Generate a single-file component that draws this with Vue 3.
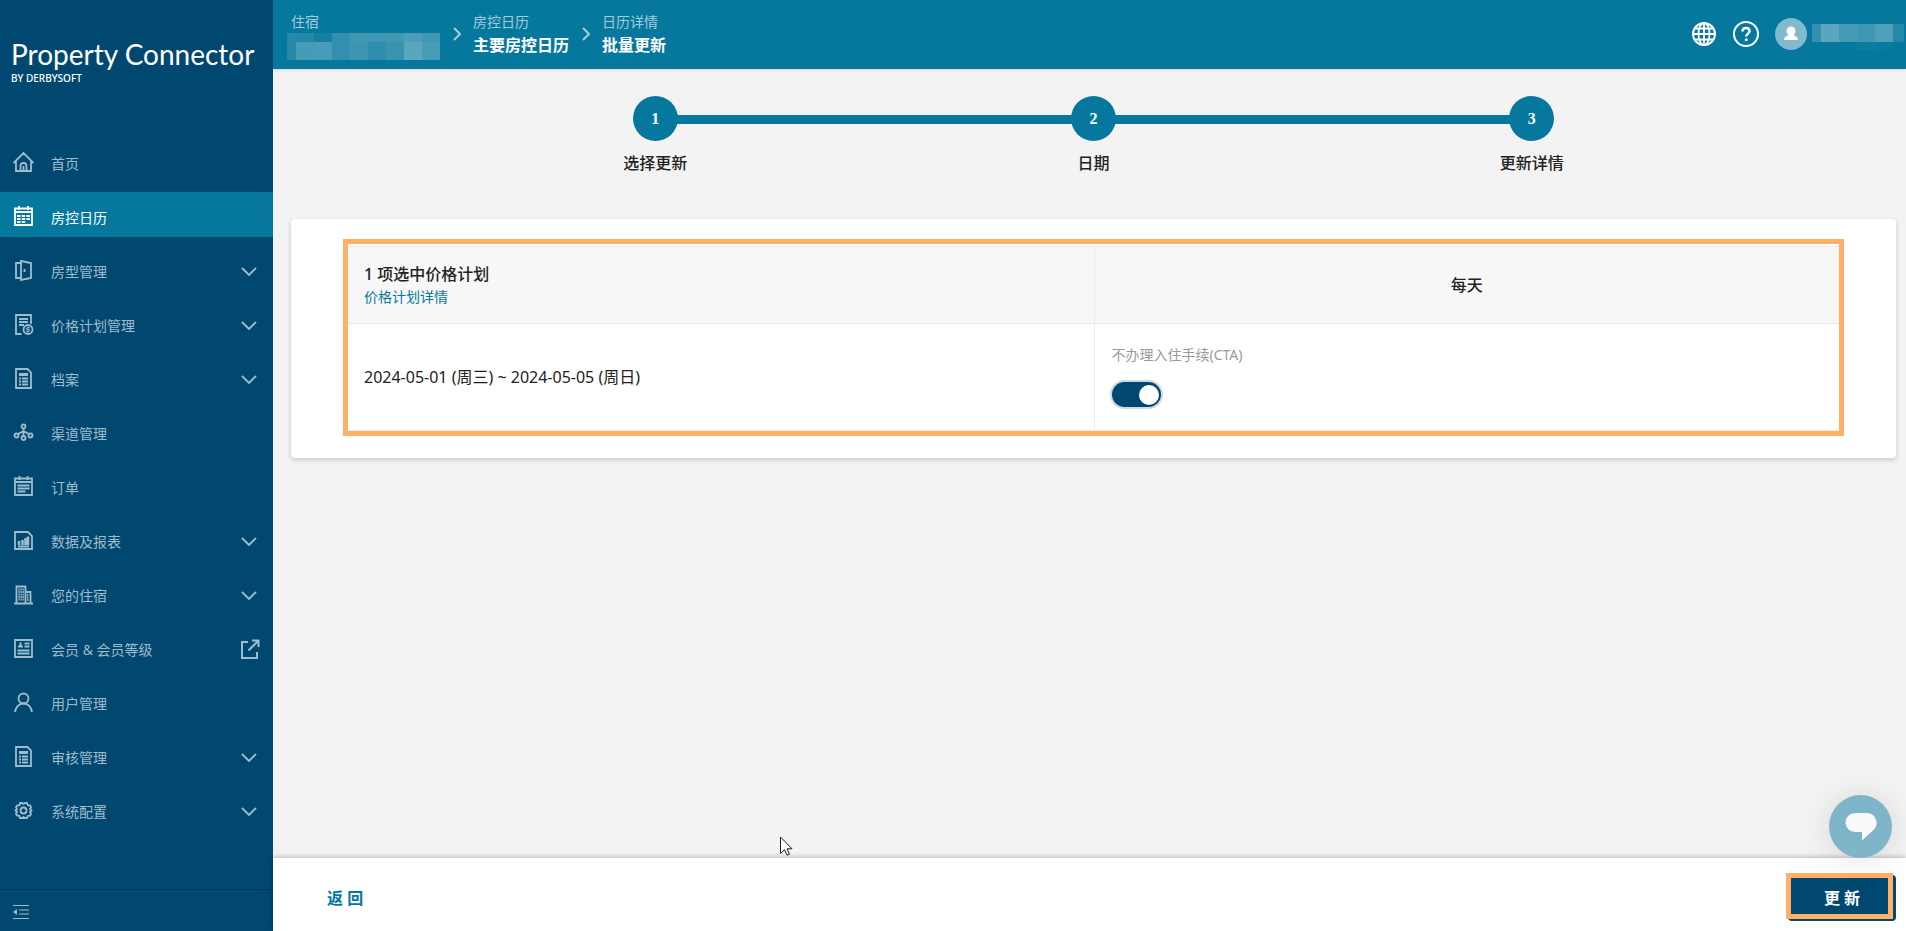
<template>
  <div class="layout">
    <aside class="sidebar">
      <div class="logo">
        <div class="logo-name">Property Connector</div>
        <div class="logo-by">BY DERBYSOFT</div>
      </div>

      <nav class="menu">
        <a
          v-for="item in menu"
          :key="item.label"
          href="#"
          class="menu-item"
          :class="{ active: item.active }"
          @click.prevent
        >
          <svg class="menu-icon" viewBox="0 0 21 21" v-html="icons[item.icon]"></svg>
          <span class="menu-label">{{ item.label }}</span>
          <svg v-if="item.children" class="chevron" viewBox="0 0 16 10">
            <path d="M1 1l7 7 7-7" />
          </svg>
          <svg v-if="item.external" class="external" viewBox="0 0 20 20">
            <path d="M8 3H2v16h15v-6M12 1.500h6.500V8M18 2L8.500 11.500" />
          </svg>
        </a>
      </nav>

      <div class="sidebar-footer">
        <button class="collapse-btn" aria-label="收起菜单">
          <svg width="16" height="14" viewBox="0 0 16 14">
            <path d="M0 .5h16M6 5h10M6 9h10M0 13.500h16" fill="none" stroke="currentColor" />
            <path d="M0 7l4-3v6z" fill="currentColor" />
          </svg>
        </button>
      </div>
    </aside>

    <div class="main">
      <header class="topbar">
        <div class="crumb">
          <span class="crumb-label">住宿</span>
          <svg class="hotel-mask" viewBox="0 0 153 27">
            <rect v-for="(b, i) in hotelBlocks" :key="i" :x="b[0]" :y="b[1]" :width="b[2]" :height="b[3]" fill="#fff" :fill-opacity="b[4]" />
          </svg>
        </div>
        <svg class="crumb-arrow" viewBox="0 0 8 14"><path d="M1 1l6 6-6 6" /></svg>
        <div class="crumb">
          <span class="crumb-label">房控日历</span>
          <a href="#" class="crumb-title" @click.prevent>主要房控日历</a>
        </div>
        <svg class="crumb-arrow" viewBox="0 0 8 14"><path d="M1 1l6 6-6 6" /></svg>
        <div class="crumb">
          <span class="crumb-label">日历详情</span>
          <span class="crumb-title">批量更新</span>
        </div>

        <div class="tools">
          <button class="tool-btn" aria-label="语言">
            <svg width="26" height="26" viewBox="0 0 26 26" fill="none" stroke="#fff" stroke-width="1.800">
              <circle cx="13" cy="13" r="11" stroke-width="2" />
              <ellipse cx="13" cy="13" rx="5.500" ry="11" />
              <path d="M13 2v22M2 13h22M4 7.500h18M4 18.500h18" />
            </svg>
          </button>
          <button class="tool-btn" aria-label="帮助">
            <svg width="26" height="26" viewBox="0 0 26 26" fill="none" stroke="#fff" stroke-width="2">
              <circle cx="13" cy="13" r="12" />
              <path d="M9.500 10.500c0-2.200 1.500-3.500 3.500-3.500s3.500 1.200 3.500 3.200c0 2.300-3.300 2.600-3.300 5.300" stroke-width="2.500" />
              <circle cx="13.200" cy="18.800" r="1.500" fill="#fff" stroke="none" />
            </svg>
          </button>
          <button class="account" aria-label="账户">
            <svg width="32" height="32" viewBox="0 0 32 32">
              <circle cx="16" cy="16" r="16" fill="#82b9cd" />
              <circle cx="16" cy="13" r="4.500" fill="#fff" />
              <path d="M9 22c0-3 2-4 5-5h4c3 1 5 2 5 5z" fill="#fff" />
            </svg>
            <svg class="user-mask" viewBox="0 0 92 32">
              <rect v-for="(b, i) in userBlocks" :key="i" :x="b[0]" :y="b[1]" :width="b[2]" :height="b[3]" fill="#fff" :fill-opacity="b[4]" />
            </svg>
          </button>
        </div>
      </header>

      <main class="content">
        <ol class="steps">
          <li v-for="(step, index) in steps" :key="step" class="step">
            <span class="step-circle">{{ index + 1 }}</span>
            <span class="step-label">{{ step }}</span>
          </li>
        </ol>

        <section class="card">
          <div class="highlight">
            <table class="plan-table">
              <thead>
                <tr>
                  <th class="plan-head">
                    <div>1 项选中价格计划</div>
                    <a href="#" class="plan-link" @click.prevent>价格计划详情</a>
                  </th>
                  <th>每天</th>
                </tr>
              </thead>
              <tbody>
                <tr>
                  <td>2024-05-01 (周三) ~ 2024-05-05 (周日)</td>
                  <td class="cta-cell">
                    <label for="cta" class="cta-label">不办理入住手续(CTA)</label>
                    <input id="cta" v-model="closedToArrival" type="checkbox" class="switch" />
                  </td>
                </tr>
              </tbody>
            </table>
          </div>
        </section>
      </main>

      <footer class="footer">
        <button class="back-btn">返 回</button>
        <div class="submit">
          <button class="submit-btn">更 新</button>
        </div>
        <button class="chat-btn" aria-label="在线客服">
          <svg width="32" height="28" viewBox="0 0 32 28">
            <path d="M10 0h12a10 10 0 0 1 7.500 16L17 27.500V19h-7A9.500 9.500 0 0 1 10 0z" fill="#fafafa" />
          </svg>
        </button>
      </footer>
    </div>

    <svg class="pointer" width="13" height="20" viewBox="0 0 13 20">
      <path d="M.5 1v16.500l4-3.800 2.500 5.500 2.500-1-2.500-5.400h5z" fill="#fff" stroke="#1c1c2c" />
    </svg>
  </div>
</template>

<script setup>
import { ref } from 'vue'

const closedToArrival = ref(true)

const steps = ['选择更新', '日期', '更新详情']

const menu = [
  { label: '首页', icon: 'home' },
  { label: '房控日历', icon: 'calendar', active: true },
  { label: '房型管理', icon: 'door', children: true },
  { label: '价格计划管理', icon: 'price', children: true },
  { label: '档案', icon: 'file', children: true },
  { label: '渠道管理', icon: 'channel' },
  { label: '订单', icon: 'order' },
  { label: '数据及报表', icon: 'chart', children: true },
  { label: '您的住宿', icon: 'building', children: true },
  { label: '会员 & 会员等级', icon: 'member', external: true },
  { label: '用户管理', icon: 'user' },
  { label: '审核管理', icon: 'file', children: true },
  { label: '系统配置', icon: 'gear', children: true }
]

// Sidebar icons, drawn on a 21x21 grid
const icons = {
  home: '<path d="M.5 11l10-10 10 10M3 9.500V19h15V9.500M7.500 19v-5a3 3 0 0 1 6 0v5M10.500 14v5"/>',
  calendar: '<path d="M2 2.500h17V19H2zM2 6h17M6 0v4M15 0v4"/><path d="M4 10h13M4 13h13M4 16h9" stroke-width="2" stroke-dasharray="3.500 1.200"/>',
  door: '<path d="M8 1l10 2v15L8 20zM8 3H3v15h5M11.500 9v3"/>',
  price: '<path d="M8.500 20H3V1h15v9M6 5h9M6 8h9M6 11h5"/><circle cx="15" cy="15.500" r="4.500"/><path d="M16.800 13.700h-2.500c-1.200 0-1.200 1.800 0 1.800h1.300c1.300 0 1.300 1.900 0 1.900h-2.500M15 12.500v6" stroke-width="1"/>',
  file: '<path d="M3 1h11.500L18 4.500V20H3z"/><path d="M6 6.500h9" stroke-width="3"/><path d="M6 10.500h2M9 10.500h6M6 13.500h2M9 13.500h6M6 16.500h2M9 16.500h6"/>',
  channel: '<circle cx="10.500" cy="4.500" r="2"/><circle cx="3.500" cy="13.500" r="2"/><circle cx="10.500" cy="16" r="2"/><circle cx="17.500" cy="13.500" r="2"/><path d="M10.500 6.500V14M5 12l4-2h3l4 2"/>',
  order: '<path d="M2 2.500h17V19H2zM2 6h17M6.500 0v4M14.500 0v4M4.500 9.500h12M4.500 12.500h12M4.500 15.500h8"/>',
  chart: '<path d="M2 2h13l4 4v13H2zM5 16.500h11"/><path d="M6 15v-4M9.500 15v-5M12.500 15V8M15 15V6.500" stroke-width="2.500"/>',
  building: '<path d="M3.500 19V2.500h9V19M12.500 8h5v11M1 19.500h19"/><path d="M5.500 5.500h6M5.500 8h6M5.500 10.500h6M5.500 13h6M5.500 15.500h6M14 11h2M14 13.500h2M14 16h2" stroke-dasharray="1.300 .7"/>',
  member: '<path d="M2 2h17v17H2zM11.500 5.500h5M11.500 8.500h5M4.500 12.500h12M4.500 15.500h12"/><path d="M5 9.500V8l1.500-1V4.500h2V7L10 8v1.500z" fill="currentColor" stroke="none"/>',
  user: '<circle cx="10.500" cy="6.500" r="5"/><path d="M2 20c.8-5 4-8.500 8.500-8.500S18.200 15 19 20" stroke-width="2"/>',
  gear: '<path d="M7 4.500V3h2l1.500 1L12 3h2l.8 2.200 2.400.3.800 2L17 9l1.500 1.500L17 12l1 2-1 1.700-2.300.3L14 18h-2l-1.500-1L9 18H7l-.7-2.200-2.300-.3-1-1.500 1-2-1.500-1.500L4 9 3 7l1-1.500 2.500-.3z"/><circle cx="10.500" cy="10.500" r="3"/>'
}

// Masked names: x, y, width, height, opacity
const hotelBlocks = [
  [0, 0, 9, 27, 0.13],
  [9, 0, 18, 9, 0.12],
  [27, 0, 18, 9, 0.06],
  [9, 9, 18, 18, 0.26],
  [27, 9, 18, 18, 0.27],
  [45, 0, 18, 27, 0.18],
  [63, 0, 54, 9, 0.24],
  [63, 9, 18, 18, 0.22],
  [81, 9, 18, 18, 0.17],
  [99, 9, 18, 18, 0.2],
  [117, 0, 18, 9, 0.28],
  [135, 0, 18, 9, 0.24],
  [117, 9, 18, 18, 0.34],
  [135, 9, 18, 18, 0.27]
]
const userBlocks = [
  [0, 6, 9, 18, 0.18],
  [9, 6, 18, 18, 0.34],
  [27, 6, 18, 18, 0.26],
  [45, 6, 18, 18, 0.23],
  [63, 6, 18, 18, 0.3],
  [81, 6, 11, 18, 0.12],
  [45, 24, 18, 8, 0.03],
  [63, 24, 18, 8, 0.02]
]
</script>

<style>
body {
  margin: 0;
  background: #f3f3f3;
}
</style>

<style scoped>
.layout {
  display: flex;
  min-height: 100vh;
  font-family: "Noto Sans", "Noto Sans CJK SC", sans-serif;
  font-size: 16px;
  line-height: 24px;
  color: #222;
}

a {
  text-decoration: none;
}

button {
  display: block;
  padding: 0;
  border: none;
  background: none;
  font: inherit;
  color: inherit;
  cursor: pointer;
}

svg {
  display: block;
  flex: none;
}

/* Sidebar */
.sidebar {
  display: flex;
  flex-direction: column;
  flex: none;
  width: 273px;
  background: #004870;
  color: #9fbccc;
}

.logo {
  padding: 37px 11px 0;
  height: 101px;
  color: #fff;
}

.logo-name {
  font-family: Lato, sans-serif;
  font-size: 28px;
  line-height: 35px;
  white-space: nowrap;
}

.logo-by {
  font-size: 10px;
  line-height: 12px;
  font-weight: 500;
}

.menu {
  display: flex;
  flex-direction: column;
  gap: 9px;
}

.menu-item {
  display: flex;
  align-items: center;
  box-sizing: border-box;
  height: 45px;
  padding: 4px 16px 0 13px;
  font-size: 14px;
  color: inherit;
}

.menu-item.active {
  background: #06789d;
  color: #fff;
}

.menu-icon {
  width: 21px;
  height: 21px;
  margin-right: 17px;
  fill: none;
  stroke: currentColor;
  stroke-width: 1.8;
}

.menu-label {
  flex: 1;
  padding-top: 2px;
}

.chevron {
  width: 16px;
  height: 10px;
  margin-top: 2px;
  fill: none;
  stroke: currentColor;
  stroke-width: 1.8;
}

.external {
  width: 20px;
  height: 20px;
  margin-right: -3px;
  fill: none;
  stroke: currentColor;
  stroke-width: 2;
}

.sidebar-footer {
  margin-top: auto;
  padding: 15px 13px 12px;
  border-top: 1px solid #003558;
}

/* Top bar */
.main {
  display: flex;
  flex-direction: column;
  flex: 1;
  min-width: 0;
}

.topbar {
  display: flex;
  align-items: center;
  box-sizing: border-box;
  height: 69px;
  padding: 0 2px 2px 18px;
  background: #06789d;
  color: #fff;
  box-shadow: 0 1px 3px rgba(0, 0, 0, 0.12);
}

.crumb {
  display: flex;
  flex-direction: column;
  height: 46px;
}

.crumb-label {
  font-size: 14px;
  line-height: 22px;
  color: #a3ccda;
}

.crumb-title {
  font-weight: 700;
  color: #fff;
}

.hotel-mask {
  width: 153px;
  height: 27px;
  margin-left: -4px;
}

.crumb-arrow {
  width: 8px;
  height: 14px;
  margin: 0 12px 0 13px;
  fill: none;
  stroke: #a3ccda;
  stroke-width: 2;
}

.tools {
  display: flex;
  align-items: center;
  gap: 16px;
  margin-left: auto;
}

.account {
  display: flex;
  align-items: center;
  gap: 5px;
}

.user-mask {
  width: 92px;
  height: 32px;
}

/* Steps */
.content {
  flex: 1;
  padding: 27px 10px 27px 18px;
}

.steps {
  display: flex;
  margin: 0 145px 44px;
  padding: 0;
  list-style: none;
}

.step {
  position: relative;
  display: flex;
  flex-direction: column;
  align-items: center;
  flex: 1;
  gap: 10px;
}

.step + .step::before {
  content: "";
  position: absolute;
  top: 19px;
  right: 50%;
  width: 100%;
  height: 9px;
  background: #06789d;
}

.step-circle {
  position: relative;
  z-index: 1;
  width: 45px;
  height: 45px;
  border-radius: 50%;
  background: #06789d;
  color: #fff;
  font-family: "Liberation Serif", serif;
  font-weight: 700;
  line-height: 45px;
  text-align: center;
}

.step-label {
  line-height: 24px;
  font-weight: 500;
}

/* Plan card */
.card {
  padding: 20px 52px 22px;
  background: #fff;
  border-radius: 4px;
  box-shadow: 0 2px 5px rgba(0, 0, 0, 0.18);
}

.highlight {
  padding-top: 2px;
  border: 5px solid #ffb065;
}

.plan-table {
  width: 100%;
  table-layout: fixed;
  border-spacing: 0;
}

.plan-table th,
.plan-table td {
  box-sizing: border-box;
  padding: 0 16px;
  border-bottom: 1px solid #ebebeb;
}

.plan-table th {
  height: 78px;
  border-top: 1px solid #ebebeb;
  background: #f7f7f7;
  font-weight: 500;
}

.plan-table td {
  height: 107px;
}

.plan-table th + th,
.plan-table td + td {
  border-left: 1px solid #ebebeb;
}

.plan-table .plan-head {
  text-align: left;
}

.plan-link {
  display: block;
  font-size: 14px;
  line-height: 22px;
  font-weight: 400;
  color: #06789d;
}

.plan-table .cta-cell {
  padding: 20px 17px 0;
  vertical-align: top;
}

.cta-label {
  display: block;
  margin-bottom: 16px;
  font-size: 14px;
  line-height: 22px;
  color: #999;
}

.switch {
  appearance: none;
  display: flex;
  align-items: center;
  box-sizing: border-box;
  width: 49px;
  height: 25px;
  margin: 0;
  padding: 0 2px;
  border-radius: 13px;
  background: #bfbfbf;
  box-shadow: 0 0 0 2px rgba(0, 72, 112, 0.2);
  cursor: pointer;
}

.switch::before {
  content: "";
  width: 20px;
  height: 20px;
  border-radius: 50%;
  background: #fff;
}

.switch:checked {
  justify-content: flex-end;
  background: #004870;
}

/* Footer */
.footer {
  position: sticky;
  bottom: 0;
  display: flex;
  align-items: center;
  justify-content: space-between;
  padding: 17px 10px 10px 54px;
  background: #fff;
  box-shadow: 0 -1px 5px rgba(0, 0, 0, 0.25);
}

.back-btn {
  font-weight: 700;
  color: #06789d;
}

.submit {
  position: relative;
}

.submit::after {
  content: "";
  position: absolute;
  inset: -2px 3px 2px -2px;
  border: 5px solid #ffb065;
  pointer-events: none;
}

.submit-btn {
  width: 108px;
  height: 46px;
  border-radius: 4px;
  background: #004870;
  color: #fff;
  font-weight: 700;
}

.chat-btn {
  position: absolute;
  right: 14px;
  bottom: 100%;
  display: flex;
  align-items: center;
  justify-content: center;
  width: 63px;
  height: 63px;
  border-radius: 50%;
  background: #7eb5c9;
  box-shadow: 0 2px 32px rgba(0, 0, 0, 0.12);
}

.pointer {
  position: fixed;
  left: 780px;
  top: 836px;
}
</style>
